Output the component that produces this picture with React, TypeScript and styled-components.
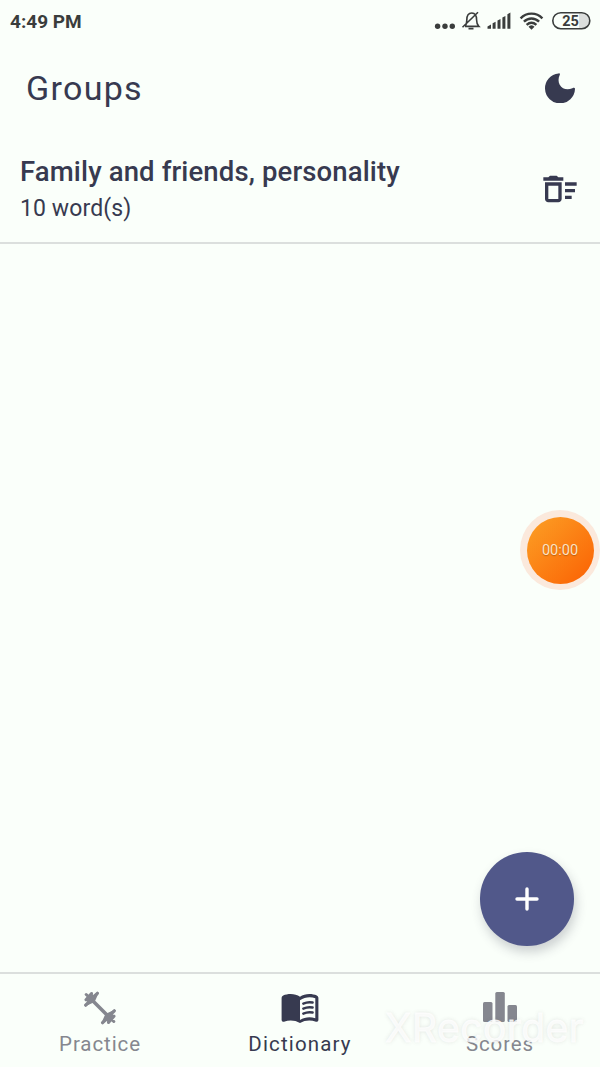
import React from "react";
import styled, { createGlobalStyle } from "styled-components";

const Global = createGlobalStyle`
  * { box-sizing: border-box; }
  body { margin: 0; background: #fafffa; font-family: Roboto, "Noto Sans", sans-serif; overflow: hidden; }
  svg { display: block; flex: none; }
`;

const ink = "#373a50";
const muted = "#85878f";

const Screen = styled.div`
  position: relative;
  display: flex;
  flex-direction: column;
  width: 600px;
  height: 1067px;
  background: #fafffa;
  color: ${ink};
`;

const StatusBar = styled.div`
  display: flex;
  justify-content: space-between;
  height: 42px;
  padding: 10px 9px 0 10px;
  color: #3a3d3c;
`;

const Clock = styled.time`
  font-size: 19px;
  line-height: 23px;
  font-weight: 700;
`;

const Header = styled.header`
  display: flex;
  align-items: center;
  justify-content: space-between;
  height: 92px;
  padding: 0 25px 0 26px;
`;

const Title = styled.h1`
  margin: 0;
  font-size: 34px;
  line-height: 40px;
  font-weight: 400;
  letter-spacing: 1.3px;
`;

const GroupRow = styled.div`
  display: flex;
  align-items: center;
  justify-content: space-between;
  height: 110px;
  padding: 0 20px;
  border-bottom: 2px solid #dbdfdd;
`;

const GroupName = styled.div`
  font-size: 27.5px;
  line-height: 36px;
  font-weight: 500;
  letter-spacing: 0.13px;
`;

const GroupCount = styled.div`
  font-size: 23px;
  line-height: 28px;
  margin-top: 4px;
  letter-spacing: 0.1px;
  transform: translateY(1px);
`;

const RowAction = styled.div`
  padding-top: 2px;
`;

const Content = styled.main`
  flex: 1;
`;

const TabBar = styled.nav`
  display: grid;
  grid-template-columns: repeat(3, 1fr);
  height: 95px;
  border-top: 2px solid #dbdfdd;
`;

const Tab = styled.div<{ $active?: boolean }>`
  display: flex;
  flex-direction: column;
  align-items: center;
  padding-top: 14px;
  color: ${(p) => (p.$active ? ink : muted)};
`;

const TabLabel = styled.span<{ $spacing: number }>`
  margin-top: 3px;
  font-size: 20.5px;
  line-height: 26px;
  letter-spacing: ${(p) => p.$spacing}px;
`;

const AddButton = styled.button`
  position: absolute;
  left: 480px;
  top: 852px;
  width: 93.5px;
  height: 93.5px;
  padding: 0;
  border: 0;
  border-radius: 50%;
  display: grid;
  place-items: center;
  background: #51588a;
  box-shadow: 2px 6px 11px rgba(60, 60, 80, 0.24);
`;

const Recorder = styled.div`
  position: absolute;
  left: 520px;
  top: 510px;
  width: 80px;
  height: 80px;
  border-radius: 50%;
  display: grid;
  place-items: center;
  background: #fbe9dc;
`;

const RecorderFace = styled.div`
  width: 67px;
  height: 67px;
  border-radius: 50%;
  display: grid;
  place-items: center;
  padding-top: 2px;
  background: linear-gradient(135deg, #fc9a22 10%, #fb6a08 85%);
  color: #fde3c4;
  font-size: 14.5px;
  line-height: 18px;
  text-shadow: 0 1px 1px rgba(120, 60, 0, 0.45);
`;

const Watermark = styled.div`
  position: absolute;
  left: 385px;
  top: 1004px;
  font-family: Inter, Roboto, sans-serif;
  font-size: 39px;
  line-height: 48px;
  font-weight: 400;
  letter-spacing: 0.45px;
  white-space: nowrap;
  color: rgba(255, 255, 255, 0.75);
  text-shadow: 0 0 4px rgba(90, 90, 90, 0.18);
  -webkit-text-stroke: 0.8px rgba(255, 255, 255, 0.75);
`;

const StatusIcons = () => (
  <svg width="157" height="24" viewBox="434 10 157 24" fill="none" stroke="currentColor">
    <g fill="currentColor" stroke="none">
      <circle cx="437.6" cy="26.3" r="2.7" />
      <circle cx="445" cy="26.3" r="2.7" />
      <circle cx="452.3" cy="26.3" r="2.7" />
      <path d="M487.500 26.500l3.500-2v4.300h-3.500zM492.600 23.200l3-1.500v7.100h-3zM497.500 20.400l3-1.500v9.900h-3zM502.400 17.600l3-1.700v12.900h-3zM507.400 14.300l3-1.800v16.300h-3z" />
      <path d="M528.500 26.700a3.700 3.700 0 0 1 6 0l-3 3z" />
    </g>
    <path d="M465 26c1.700-1.500 1.800-3.500 1.800-6 0-4 1.500-7 5-7s4.800 3 4.800 7c0 3 .2 4.500 2.200 6.400h-13.800M462.500 27.300l15.500-15" strokeWidth="1.6" />
    <path d="M468.500 28.600h5" strokeWidth="1.8" />
    <path d="M520.600 18.300c6-6.200 15.800-6.200 21.800 0M523.900 21.700c4.500-4.300 10.700-4.300 15.200 0M526.600 24.900c3-2.600 6.800-2.600 9.800 0" strokeWidth="2.4" />
    <path d="M579 13.500h3.500a7.300 7.300 0 0 1 0 14.600H579z" fill="#dcdfdd" stroke="none" />
    <rect x="552.800" y="12.700" width="37" height="16" rx="8" strokeWidth="1.6" />
    <text x="570.500" y="26" textAnchor="middle" fill="currentColor" stroke="none" fontSize="14.500" fontWeight="700" fontFamily="Roboto, sans-serif">25</text>
  </svg>
);

const MoonIcon = () => (
  <svg width="30" height="30" viewBox="0 0 30 30" fill="currentColor">
    <path d="M13.600.400C14.800.200 15.300.800 14.700 1.900 13.200 5 13.100 8.800 14.700 11.700 17.200 16.200 22.500 17.300 27.400 15.200 29 14.600 30.100 14.700 30 16A15 15 0 1 1 13.600.400z" />
  </svg>
);

const DeleteSweepIcon = () => (
  <svg width="40" height="40" viewBox="0 0 24 24" fill="currentColor">
    <path d="M15 16h4v2h-4zm0-8h7v2h-7zm0 4h6v2h-6zM3 18c0 1.100.900 2 2 2h6c1.100 0 2-.900 2-2V8H3v10zM5 10h6v8H5v-8zm5-6H6L5 5H2v2h12V5h-3z" />
  </svg>
);

const DumbbellIcon = () => (
  <svg width="40" height="40" viewBox="0 0 40 40" fill="currentColor" stroke="currentColor" strokeLinecap="round" strokeLinejoin="round">
    <path d="M12 12L28 28" strokeWidth="3.600" />
    <path d="M5.700 17.200L9 13.900M14.600 7.900L17.400 5.300M34.300 22.800L31 26.100M25.400 32.100L22.600 34.700" strokeWidth="3.200" />
    <path d="M5.700 17.200L17.400 5.300 14.500 11.800 12 14.200z" strokeWidth="2" />
    <path d="M34.300 22.800L22.600 34.700 25.500 28.200 28 25.800z" strokeWidth="2" />
    <path d="M6 11.800L11.500 5.500M6.200 6.500L10.500 10.700M34 28.200L28.500 34.500M33.800 33.500L29.500 29.300" strokeWidth="3" />
    <path d="M7 12L12 7 14 9 9 14zM33 28L28 33 26 31 31 26z" strokeWidth="2" />
  </svg>
);

const BookIcon = () => (
  <svg width="40" height="40" viewBox="0 0 40 40" fill="currentColor">
    <path fillRule="evenodd" d="M20 8.800C15.500 5.300 8 5.300 3.200 7.500Q1.600 8.300 1.600 9.800V32Q1.600 34.300 4 33.700C9.500 31.800 15 32.200 20 35 25 32.200 30.500 31.800 36 33.700Q38.400 34.300 38.400 32V9.800Q38.400 8.300 36.800 7.500C32 5.300 24.500 5.300 20 8.800zM20 12.300C24.500 9 30.500 8.500 35.300 10.200V30.200C30 28.700 24.500 29.200 20 32z" />
    <path d="M23.300 15.600q4.700-2.100 9.300-1.100M23.300 20.600q4.700-2.100 9.300-1.100M23.300 25.600q4.700-2.100 9.300-1.100" fill="none" stroke="currentColor" strokeWidth="2.500" strokeLinecap="round" />
  </svg>
);

const ChartIcon = () => (
  <svg width="40" height="40" viewBox="0 0 40 40" fill="currentColor">
    <rect x="3" y="14" width="9.500" height="20" rx="1.500" />
    <rect x="15.300" y="4" width="9.500" height="30" rx="1.500" />
    <rect x="27.500" y="17" width="9.500" height="17" rx="1.500" />
  </svg>
);

export default function App() {
  return (
    <Screen>
      <Global />
      <StatusBar>
        <Clock>4:49 PM</Clock>
        <StatusIcons />
      </StatusBar>
      <Header>
        <Title>Groups</Title>
        <MoonIcon />
      </Header>
      <GroupRow>
        <div>
          <GroupName>Family and friends, personality</GroupName>
          <GroupCount>10 word(s)</GroupCount>
        </div>
        <RowAction>
          <DeleteSweepIcon />
        </RowAction>
      </GroupRow>
      <Content />
      <TabBar>
        <Tab>
          <DumbbellIcon />
          <TabLabel $spacing={0.9}>Practice</TabLabel>
        </Tab>
        <Tab $active>
          <BookIcon />
          <TabLabel $spacing={1.15}>Dictionary</TabLabel>
        </Tab>
        <Tab>
          <ChartIcon />
          <TabLabel $spacing={0.9}>Scores</TabLabel>
        </Tab>
      </TabBar>
      <AddButton aria-label="Add group">
        <svg width="26" height="26" viewBox="0 0 26 26" stroke="#fff" strokeWidth="3.400" strokeLinecap="round">
          <path d="M13 3v20M3 13h20" />
        </svg>
      </AddButton>
      <Recorder>
        <RecorderFace>00:00</RecorderFace>
      </Recorder>
      <Watermark>XRecorder</Watermark>
    </Screen>
  );
}
